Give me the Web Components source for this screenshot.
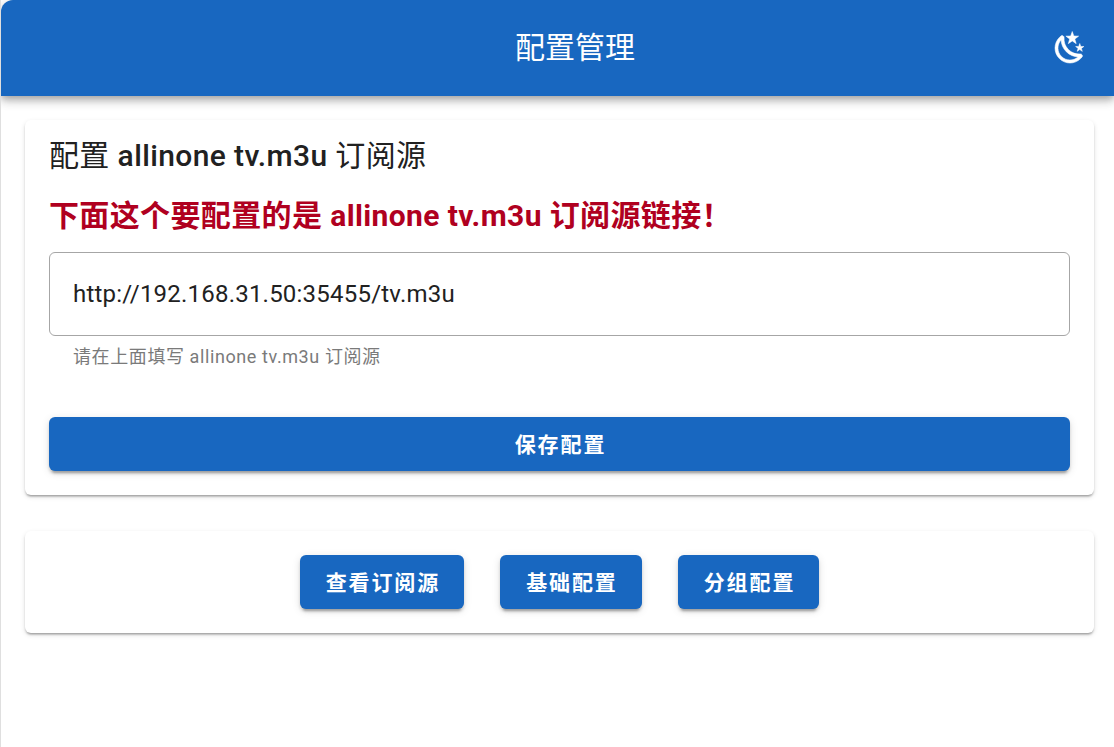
<!DOCTYPE html>
<html lang="zh-CN">
<head>
<meta charset="utf-8">
<title>配置管理</title>
<style>
  html { height: 100%; background: #fff; }
  body {
    margin: 0; min-height: 100%; box-sizing: border-box;
    border-left: 1px solid #dfdfdf;
    font-family: Roboto, "Noto Sans CJK SC", sans-serif;
    color: #212121;
    --primary: #1867c0;
    --error: #b00020;
  }
</style>
</head>
<body>
<config-app></config-app>
<script>
const define = (name, html, setup) => {
  const template = document.createElement('template');
  template.innerHTML = html;
  customElements.define(name, class extends HTMLElement {
    constructor() {
      super();
      this.attachShadow({ mode: 'open' }).append(template.content.cloneNode(true));
    }
    connectedCallback() { if (setup) setup(this, this.shadowRoot); }
  });
};

define('app-bar', `
  <style>
    :host { display: block; }
    header {
      display: flex; align-items: center; height: 96px; box-sizing: border-box;
      padding: 0 8px 0 115px; color: #fff; background: var(--primary);
      border-top-left-radius: 12px;
      box-shadow: 0 3px 6px -1px rgba(0,0,0,.2), 0 6px 8px rgba(0,0,0,.14), 0 2px 15px rgba(0,0,0,.12);
    }
    h1 { flex: 1; margin: 0; text-align: center; font-size: 30px; line-height: 48px; font-weight: 400; }
  </style>
  <header><h1><slot></slot></h1><slot name="action"></slot></header>`);

define('theme-toggle', `
  <style>
    :host { display: block; }
    button {
      display: grid; place-items: center; width: 72px; height: 72px; padding: 0;
      border: 0; border-radius: 50%; background: none; color: inherit; cursor: pointer;
    }
    svg { display: block; width: 36px; height: 36px; fill: currentColor; stroke: currentColor; stroke-width: .35; }
  </style>
  <button type="button" aria-label="切换主题">
    <svg viewBox="0 0 24 24" aria-hidden="true"><path d="M17.75,4.09L15.22,6.03L16.13,9.09L13.5,7.28L10.87,9.09L11.78,6.03L9.25,4.09L12.44,4L13.5,1L14.56,4L17.75,4.09M21.25,11L19.61,12.25L20.2,14.23L18.5,13.06L16.8,14.23L17.39,12.25L15.75,11L17.81,10.95L18.5,9L19.19,10.95L21.25,11M18.97,15.95C19.8,15.87 20.69,17.05 20.16,17.8C19.84,18.25 19.5,18.67 19.08,19.07C15.17,23 8.84,23 4.94,19.07C1.03,15.17 1.03,8.83 4.94,4.93C5.34,4.53 5.76,4.17 6.21,3.85C6.96,3.32 8.14,4.21 8.06,5.04C7.79,7.9 8.75,10.87 10.95,13.06C13.14,15.26 16.1,16.22 18.97,15.95M17.33,17.97C14.5,17.81 11.7,16.64 9.53,14.5C7.36,12.31 6.2,9.5 6.04,6.68C3.23,9.82 3.34,14.64 6.35,17.66C9.37,20.67 14.19,20.78 17.33,17.97Z"/></svg>
  </button>`);

define('app-card', `
  <style>
    :host {
      display: block; padding: 24px; border-radius: 6px; background: #fff;
      box-shadow: 0 3px 2px -2px rgba(0,0,0,.2), 0 2px 2px rgba(0,0,0,.14), 0 2px 5px rgba(0,0,0,.12);
    }
    :host([titled]) { padding-top: 12px; }
  </style>
  <slot></slot>`);

define('app-button', `
  <style>
    :host { display: block; }
    button {
      display: block; width: 100%; height: 54px; padding: 2px 24px 0 26px; border: 0; border-radius: 6px;
      font-family: inherit; font-size: 21px; line-height: 30px; font-weight: 700;
      letter-spacing: .09em; white-space: nowrap; cursor: pointer;
      color: #fff; background: var(--primary);
      box-shadow: 0 5px 2px -3px rgba(0,0,0,.2), 0 3px 3px rgba(0,0,0,.14), 0 2px 8px rgba(0,0,0,.12);
    }
  </style>
  <button type="button"><slot></slot></button>`);

define('text-field', `
  <style>
    :host { display: block; }
    label { display: block; font-size: 30px; line-height: 48px; font-weight: 700; letter-spacing: .0125em; color: var(--error); }
    input {
      display: block; width: 100%; height: 84px; box-sizing: border-box; margin-top: 12px; padding: 0 23px;
      border: 1px solid #a6a6a6; border-radius: 6px; background: none; color: inherit;
      font-family: inherit; font-size: 24px; line-height: 36px; letter-spacing: .009em; outline: 0;
    }
    input:focus { border-color: var(--primary); }
    p { margin: 9px 24px 0; font-size: 18px; line-height: 24px; letter-spacing: .033em; color: #7a7a7a; }
  </style>
  <label for="field"><slot></slot></label>
  <input id="field" type="text" aria-describedby="hint">
  <p id="hint"><slot name="hint"></slot></p>`,
  (host, root) => { root.querySelector('input').value = host.getAttribute('value') || ''; });

define('config-app', `
  <style>
    :host { display: block; }
    main { display: grid; gap: 36px; padding: 24px 20px 24px 24px; }
    h2 { margin: 0 0 12px; font-size: 30px; line-height: 48px; font-weight: 500; letter-spacing: .0125em; }
    .save { margin-top: 48px; }
    .cjk { font-weight: 400; }
    nav { display: flex; flex-wrap: wrap; justify-content: center; gap: 36px; }
  </style>
  <app-bar>配置管理<theme-toggle slot="action"></theme-toggle></app-bar>
  <main>
    <app-card titled>
      <h2><span class="cjk">配置</span> allinone tv.m3u <span class="cjk">订阅源</span></h2>
      <text-field value="http://192.168.31.50:35455/tv.m3u">下面这个要配置的是 allinone tv.m3u 订阅源链接！<span slot="hint">请在上面填写 allinone tv.m3u 订阅源</span></text-field>
      <app-button class="save">保存配置</app-button>
    </app-card>
    <app-card>
      <nav>
        <app-button>查看订阅源</app-button>
        <app-button>基础配置</app-button>
        <app-button>分组配置</app-button>
      </nav>
    </app-card>
  </main>`);
</script>
</body>
</html>
